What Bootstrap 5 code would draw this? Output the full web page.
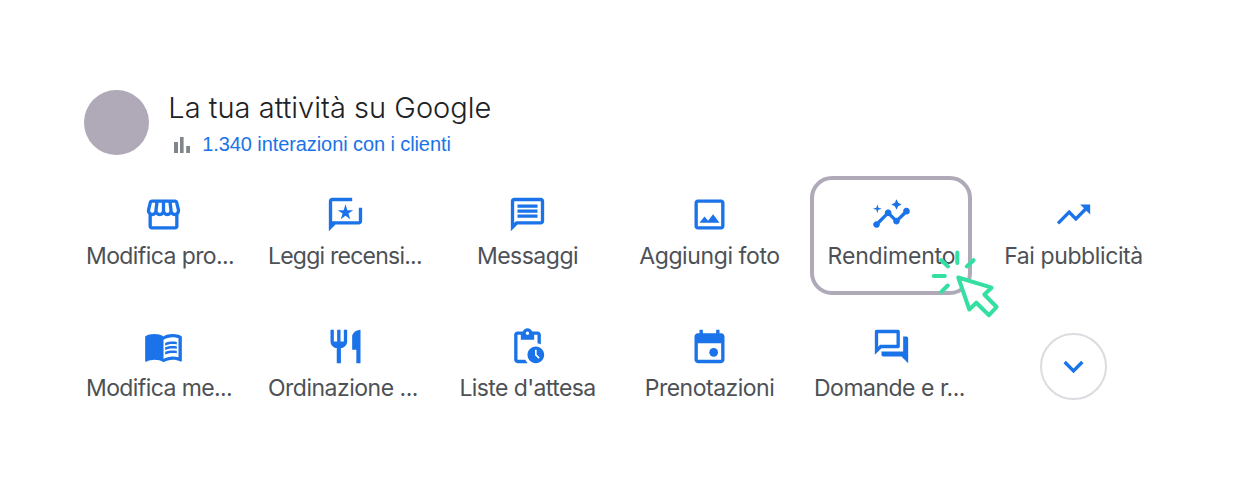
<!DOCTYPE html>
<html lang="it">
<head>
  <meta charset="UTF-8">
  <meta name="viewport" content="width=device-width, initial-scale=1">
  <title>La tua attività su Google</title>
  <link rel="stylesheet" href="https://cdn.jsdelivr.net/npm/bootstrap@5.3.0/dist/css/bootstrap.min.css">
  <style>
    body { font-family: Inter, "Liberation Sans", sans-serif; background: #fff; overflow: hidden; }
    .scheda { width: 1092px; margin-left: 72.5px; padding-top: 90px; }
    .intestazione { height: 104px; padding-left: 11.8px; }
    .avatar { width: 64.5px; height: 64.5px; background: #afa9b8; }
    .testata { margin-left: 19.5px; }
    .titolo { font-size: 29px; line-height: 36px; letter-spacing: .02px; color: #202124; }
    .interazioni { font: 20px/24px "Liberation Sans", Arial, sans-serif; letter-spacing: -.09px; color: #1a73e8; margin-top: 6px; }
    .interazioni svg { width: 17px; height: 16px; margin: 5px 11.3px 0 5.7px; fill: #80868b; }

    .voce { height: 132px; color: #4d5156; }
    .icona { width: 41px; height: 41px; fill: #1a73e8; }
    .etichetta { width: 155px; margin-top: 4.5px; font-size: 23px; line-height: 32px; letter-spacing: -.5px; white-space: nowrap; text-align: center; }
    .tronca { text-align: left; }
    .ls-1 { letter-spacing: -.15px; }
    .ls-4 { letter-spacing: -.4px; }
    .ls-6 { letter-spacing: -.6px; }
    .ls-8 { letter-spacing: -.77px; }

    .riquadro { left: 9.9px; top: -18px; width: 161.4px; height: 118.7px; border: 4px solid #afa9b8; border-radius: 22px; }
    .cursore { left: 129.5px; top: 54px; width: 72px; height: 72px; z-index: 1; }
    .altro { width: 67px; height: 67px; margin-top: 7px; border: 2px solid #dadce0; background: #fff; }
  </style>
</head>
<body>

<main class="scheda">
  <header class="intestazione d-flex">
    <div class="avatar rounded-circle"></div>
    <div class="testata">
      <h1 class="titolo fw-light mb-0">La tua attività su Google</h1>
      <div class="interazioni d-flex">
        <svg viewBox="0 0 17 16"><path d="M0 5h4v11H0zM6 0h3.600v16H6zM12.200 9h3.800v7h-3.800z"/></svg>
        <span>1.340 interazioni con i clienti</span>
      </div>
    </div>
  </header>

  <div class="row row-cols-6 g-0">
    <div class="col voce d-flex flex-column align-items-center">
      <svg class="icona" viewBox="-.3 -.3 24.600 24.600"><path d="M21.900 8.890l-1.050-4.370c-.22-.9-1-1.520-1.910-1.520H5.050c-.9 0-1.690.63-1.900 1.520L2.100 8.890c-.24 1.020-.02 2.060.62 2.880.08.11.19.19.28.29V19c0 1.100.9 2 2 2h14c1.100 0 2-.9 2-2v-6.940c.09-.09.2-.18.28-.28.64-.82.87-1.870.62-2.890zm-2.990-3.900l1.050 4.370c.1.42.01.84-.25 1.170-.14.18-.44.47-.94.47-.61 0-1.140-.49-1.210-1.140L16.980 5l1.930-.01zM13 5h1.960l.54 4.520c.05.39-.07.78-.33 1.070-.22.26-.54.41-.95.41-.67 0-1.220-.59-1.220-1.310V5zM8.490 9.520L9.040 5H11v4.690c0 .72-.55 1.310-1.290 1.310-.34 0-.65-.15-.89-.41-.25-.29-.37-.68-.33-1.070zm-4.450-.16L5.050 5h1.970l-.58 4.860c-.08.65-.6 1.140-1.210 1.140-.49 0-.8-.29-.93-.47-.27-.32-.36-.75-.26-1.170zM5 19v-6.030c.08.01.15.03.23.03.87 0 1.660-.36 2.240-.95.6.6 1.400.95 2.310.95.87 0 1.650-.36 2.230-.93.59.57 1.390.93 2.290.93.84 0 1.640-.35 2.240-.95.58.59 1.370.95 2.240.95.08 0 .15-.02.23-.03V19H5z"/></svg>
      <div class="etichetta tronca ls-6">Modifica pro...</div>
    </div>
    <div class="col voce d-flex flex-column align-items-center">
      <svg class="icona" viewBox="-.3 -.3 24.600 24.600"><path d="M16 2H4c-1.100 0-2 .9-2 2v18l4-4h14c1.100 0 2-.9 2-2V8h-2v8H4V4h12z"/><path d="M12 5.900l1.090 3.500h3.510l-2.840 2.070L14.850 14.800 12 12.750 9.150 14.800l1.090-3.330L7.400 9.400h3.510z"/></svg>
      <div class="etichetta tronca ls-8">Leggi recensi...</div>
    </div>
    <div class="col voce d-flex flex-column align-items-center">
      <svg class="icona" viewBox="-.3 -.3 24.600 24.600"><path d="M4 4h16v12H5.170L4 17.170V4m0-2c-1.100 0-1.990.9-1.990 2L2 22l4-4h14c1.100 0 2-.9 2-2V4c0-1.100-.9-2-2-2H4zm2 10h12v2H6v-2zm0-3h12v2H6V9zm0-3h12v2H6V6z"/></svg>
      <div class="etichetta">Messaggi</div>
    </div>
    <div class="col voce d-flex flex-column align-items-center">
      <svg class="icona" viewBox="-.3 -.3 24.600 24.600"><path d="M19 5v14H5V5h14m0-2H5c-1.100 0-2 .9-2 2v14c0 1.100.9 2 2 2h14c1.100 0 2-.9 2-2V5c0-1.100-.9-2-2-2zm-4.860 8.860l-3 3.870L9 13.140 6 17h12l-3.860-5.140z"/></svg>
      <div class="etichetta ls-4">Aggiungi foto</div>
    </div>
    <div class="col voce d-flex flex-column align-items-center position-relative">
      <div class="riquadro position-absolute"></div>
      <svg class="icona" viewBox="-.3 -.3 24.600 24.600"><path d="M21 8c-1.450 0-2.260 1.440-1.930 2.510l-3.550 3.560c-.3-.09-.74-.09-1.040 0l-2.550-2.550C12.270 10.450 11.460 9 10 9c-1.450 0-2.270 1.440-1.930 2.520l-4.560 4.550C2.440 15.740 1 16.550 1 18c0 1.100.9 2 2 2 1.450 0 2.260-1.440 1.930-2.510l4.550-4.560c.3.09.74.09 1.040 0l2.550 2.550C12.730 16.550 13.540 18 15 18c1.450 0 2.270-1.440 1.930-2.520l3.560-3.550c1.070.33 2.510-.48 2.510-1.930 0-1.100-.9-2-2-2z"/><path d="M15 2.900l.98 2.120 2.120.98-2.120.98L15 9.100l-.98-2.120L11.900 6l2.120-.98zM3.500 5.800l.6 2.100 2.100.6-2.100.6-.6 2.100-.6-2.100-2.100-.6 2.100-.6z"/></svg>
      <div class="etichetta ls-1">Rendimento</div>
      <!-- puntatore del mouse con i raggi del clic -->
      <svg class="cursore position-absolute" viewBox="930 248 72 72">
        <g fill="none" stroke="#34e0a1" stroke-width="4" stroke-linecap="round" stroke-linejoin="round">
          <path d="M958.300 277.500l33.300 10.200-7.300 6.800 12.300 12.500-7.600 8.200-12.700-12.500-7 6.800z" fill="#fff"/>
          <path d="M957.300 252.500v10.500M973.500 260.200l-6.700 6.300M933.800 276h11M941.700 291.500l6-6M941.300 260.200l6.700 6.300"/>
        </g>
      </svg>
    </div>
    <div class="col voce d-flex flex-column align-items-center">
      <svg class="icona" viewBox="-.3 -.3 24.600 24.600"><path d="M16 6l2.290 2.290-4.880 4.880-4-4L2 16.590 3.410 18l6-6 4 4 6.300-6.290L22 12V6z"/></svg>
      <div class="etichetta ls-4">Fai pubblicità</div>
    </div>
    <div class="col voce d-flex flex-column align-items-center">
      <svg class="icona" viewBox="-.3 -.3 24.600 24.600"><path d="M21 5c-1.110-.35-2.330-.5-3.500-.5-1.950 0-4.050.4-5.500 1.500-1.450-1.100-3.550-1.500-5.500-1.500S2.450 4.900 1 6v14.650c0 .25.25.5.5.5.1 0 .15-.05.25-.05C3.100 20.450 5.050 20 6.500 20c1.950 0 4.050.4 5.500 1.500 1.350-.85 3.800-1.500 5.500-1.500 1.650 0 3.350.3 4.750 1.050.1.05.15.05.25.05.25 0 .5-.25.5-.5V6c-.6-.45-1.250-.75-2-1zm0 13.500c-1.100-.35-2.300-.5-3.500-.5-1.700 0-4.150.65-5.500 1.500V8c1.350-.85 3.800-1.500 5.500-1.500 1.200 0 2.400.15 3.500.5v11.500z"/><path d="M17.500 10.500c.88 0 1.730.09 2.500.26V9.240c-.79-.15-1.640-.24-2.500-.24-1.700 0-3.240.29-4.500.83v1.660c1.130-.64 2.700-.99 4.500-.99zM13 12.490v1.660c1.130-.64 2.700-.99 4.500-.99.88 0 1.730.09 2.500.26V11.900c-.79-.15-1.640-.24-2.500-.24-1.700 0-3.240.3-4.500.83zM17.500 14.330c-1.700 0-3.240.29-4.500.83v1.660c1.130-.64 2.700-.99 4.500-.99.88 0 1.730.09 2.500.26v-1.520c-.79-.16-1.640-.24-2.500-.24z"/></svg>
      <div class="etichetta tronca ls-6">Modifica me...</div>
    </div>
    <div class="col voce d-flex flex-column align-items-center">
      <svg class="icona" viewBox="-.3 -.3 24.600 24.600"><path d="M11 9H9V2H7v7H5V2H3v7c0 2.120 1.660 3.840 3.750 3.970V22h2.500v-9.030C11.340 12.840 13 11.120 13 9V2h-2v7zm5-3v8h2.500v8H21V2c-2.760 0-5 2.240-5 4z"/></svg>
      <div class="etichetta tronca">Ordinazione ...</div>
    </div>
    <div class="col voce d-flex flex-column align-items-center">
      <svg class="icona" viewBox="-.3 -.3 24.600 24.600"><path d="M17 12c-2.760 0-5 2.240-5 5s2.240 5 5 5 5-2.240 5-5-2.240-5-5-5zm1.650 7.350L16.500 17.200V14h1v2.790l1.850 1.850-.7.710zM18 3h-3.180C14.400 1.840 13.300 1 12 1s-2.400.84-2.820 2H6c-1.100 0-2 .9-2 2v15c0 1.100.9 2 2 2h6.110c-.59-.57-1.070-1.250-1.420-2H6V5h2v3h8V5h2v5.080c.71.1 1.380.31 2 .6V5c0-1.100-.9-2-2-2zm-6 2c-.55 0-1-.45-1-1s.45-1 1-1 1 .45 1 1-.45 1-1 1z"/></svg>
      <div class="etichetta ls-6">Liste d'attesa</div>
    </div>
    <div class="col voce d-flex flex-column align-items-center">
      <svg class="icona" viewBox="-.3 -.3 24.600 24.600"><path fill-rule="evenodd" d="M19 4h-1V2h-2v2H8V2H6v2H5c-1.100 0-2 .9-2 2v14c0 1.100.9 2 2 2h14c1.100 0 2-.9 2-2V6c0-1.100-.9-2-2-2zm0 16H5V10h14v10z"/><circle cx="14.500" cy="15.500" r="2.600"/></svg>
      <div class="etichetta">Prenotazioni</div>
    </div>
    <div class="col voce d-flex flex-column align-items-center">
      <svg class="icona" viewBox="-.3 -.3 24.600 24.600"><path d="M15 4v7H5.170L4 12.170V4h11m1-2H3c-.55 0-1 .45-1 1v14l4-4h10c.55 0 1-.45 1-1V3c0-.55-.45-1-1-1zm5 4h-2v9H6v2c0 .55.45 1 1 1h11l4 4V7c0-.55-.45-1-1-1z"/></svg>
      <div class="etichetta tronca">Domande e r...</div>
    </div>
    <div class="col voce d-flex flex-column align-items-center">
      <button type="button" class="altro rounded-circle p-0 d-flex align-items-center justify-content-center" aria-label="Altro">
        <svg class="icona" viewBox="-.3 -.3 24.600 24.600"><path d="M16.590 8.590L12 13.170 7.410 8.590 6 10l6 6 6-6z"/></svg>
      </button>
    </div>
  </div>
</main>

<script src="https://cdn.jsdelivr.net/npm/bootstrap@5.3.0/dist/js/bootstrap.bundle.min.js"></script>
</body>
</html>
